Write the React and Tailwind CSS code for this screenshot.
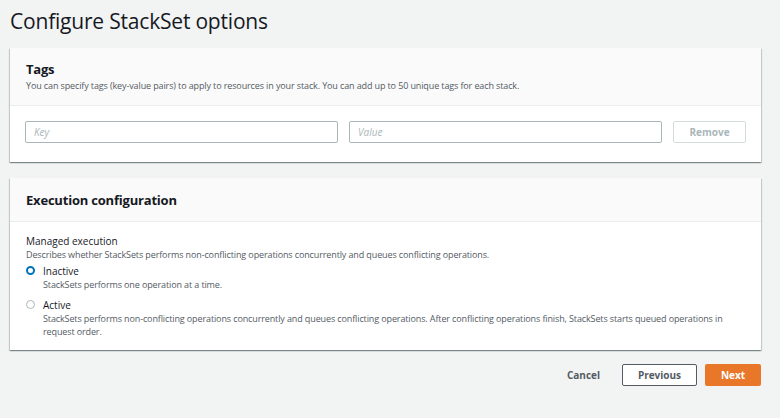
export default function App() {
  const font = { fontFamily: '"Open Sans", "Liberation Sans", sans-serif' }
  const card = 'w-[751px] bg-white shadow-[0_1px_1px_rgba(0,28,36,0.3),1px_1px_1px_rgba(0,28,36,0.15),-1px_1px_1px_rgba(0,28,36,0.15)]'
  return (
    <div className="min-h-[418px] w-[780px] bg-[#f2f3f3] px-[10px] pt-[7px] text-[#16191f]" style={font}>
      <h1 className="text-[21px] leading-[28px] font-normal tracking-[-0.2px] text-[#16191f]">Configure StackSet options</h1>

      <section className={`mt-[13px] ${card}`}>
        <div className="h-[58px] border-b border-[#eaeded] bg-[#fafafa] px-[16px] pt-[11px]">
          <h2 className="text-[13px] leading-[20px] font-bold tracking-[-0.2px]">Tags</h2>
          <p className="text-[9px] leading-[14px] tracking-[-0.12px] text-[#545b64]">
            You can specify tags (key-value pairs) to apply to resources in your stack. You can add up to 50 unique tags for each stack.
          </p>
        </div>
        <div className="flex items-center gap-[11px] px-[15px] pt-[15px] pb-[19px]">
          <input placeholder="Key" className="h-[22px] w-[313px] rounded-[2px] border border-[#aab7b8] px-[8px] text-[10px] italic outline-none placeholder:text-[#aab7b8]" />
          <input placeholder="Value" className="h-[22px] w-[313px] rounded-[2px] border border-[#aab7b8] px-[8px] text-[10px] italic outline-none placeholder:text-[#aab7b8]" />
          <button className="h-[22px] w-[73px] rounded-[2px] border border-[#d5dbdb] text-[10px] font-bold text-[#aab7b8]">Remove</button>
        </div>
      </section>

      <section className={`mt-[16px] ${card}`}>
        <div className="flex h-[44px] items-center border-b border-[#eaeded] bg-[#fafafa] px-[16px]">
          <h2 className="text-[13px] leading-[20px] font-bold tracking-[-0.2px]">Execution configuration</h2>
        </div>
        <div className="px-[16px] pt-[12px] pb-[12px]">
          <div className="text-[10px] leading-[14px]">Managed execution</div>
          <div className="text-[9px] leading-[13px] tracking-[-0.12px] text-[#545b64]">
            Describes whether StackSets performs non-conflicting operations concurrently and queues conflicting operations.
          </div>
          <div className="mt-[3px] flex gap-[8px]">
            <span className="mt-[2px] h-[9px] w-[9px] shrink-0 rounded-full border-[2.5px] border-[#0073bb] bg-white" />
            <div>
              <div className="text-[10px] leading-[14px]">Inactive</div>
              <div className="text-[9px] leading-[13px] tracking-[-0.12px] text-[#545b64]">StackSets performs one operation at a time.</div>
            </div>
          </div>
          <div className="mt-[7px] flex gap-[8px]">
            <span className="mt-[2px] h-[9px] w-[9px] shrink-0 rounded-full border border-[#aab7b8] bg-white" />
            <div className="pr-[20px]">
              <div className="text-[10px] leading-[14px]">Active</div>
              <div className="text-[9px] leading-[13px] tracking-[-0.12px] text-[#545b64]">
                StackSets performs non-conflicting operations concurrently and queues conflicting operations. After conflicting operations finish, StackSets starts queued operations in request order.
              </div>
            </div>
          </div>
        </div>
      </section>

      <div className="mt-[14px] flex w-[751px] items-center justify-end">
        <button className="mr-[22px] text-[10px] font-bold text-[#545b64]">Cancel</button>
        <button className="h-[22px] w-[75px] rounded-[2px] border border-[#545b64] bg-white text-[10px] font-bold text-[#545b64]">Previous</button>
        <button className="ml-[8px] h-[22px] w-[56px] rounded-[2px] bg-[#e8772a] text-[10px] font-bold text-white">Next</button>
      </div>
    </div>
  )
}
